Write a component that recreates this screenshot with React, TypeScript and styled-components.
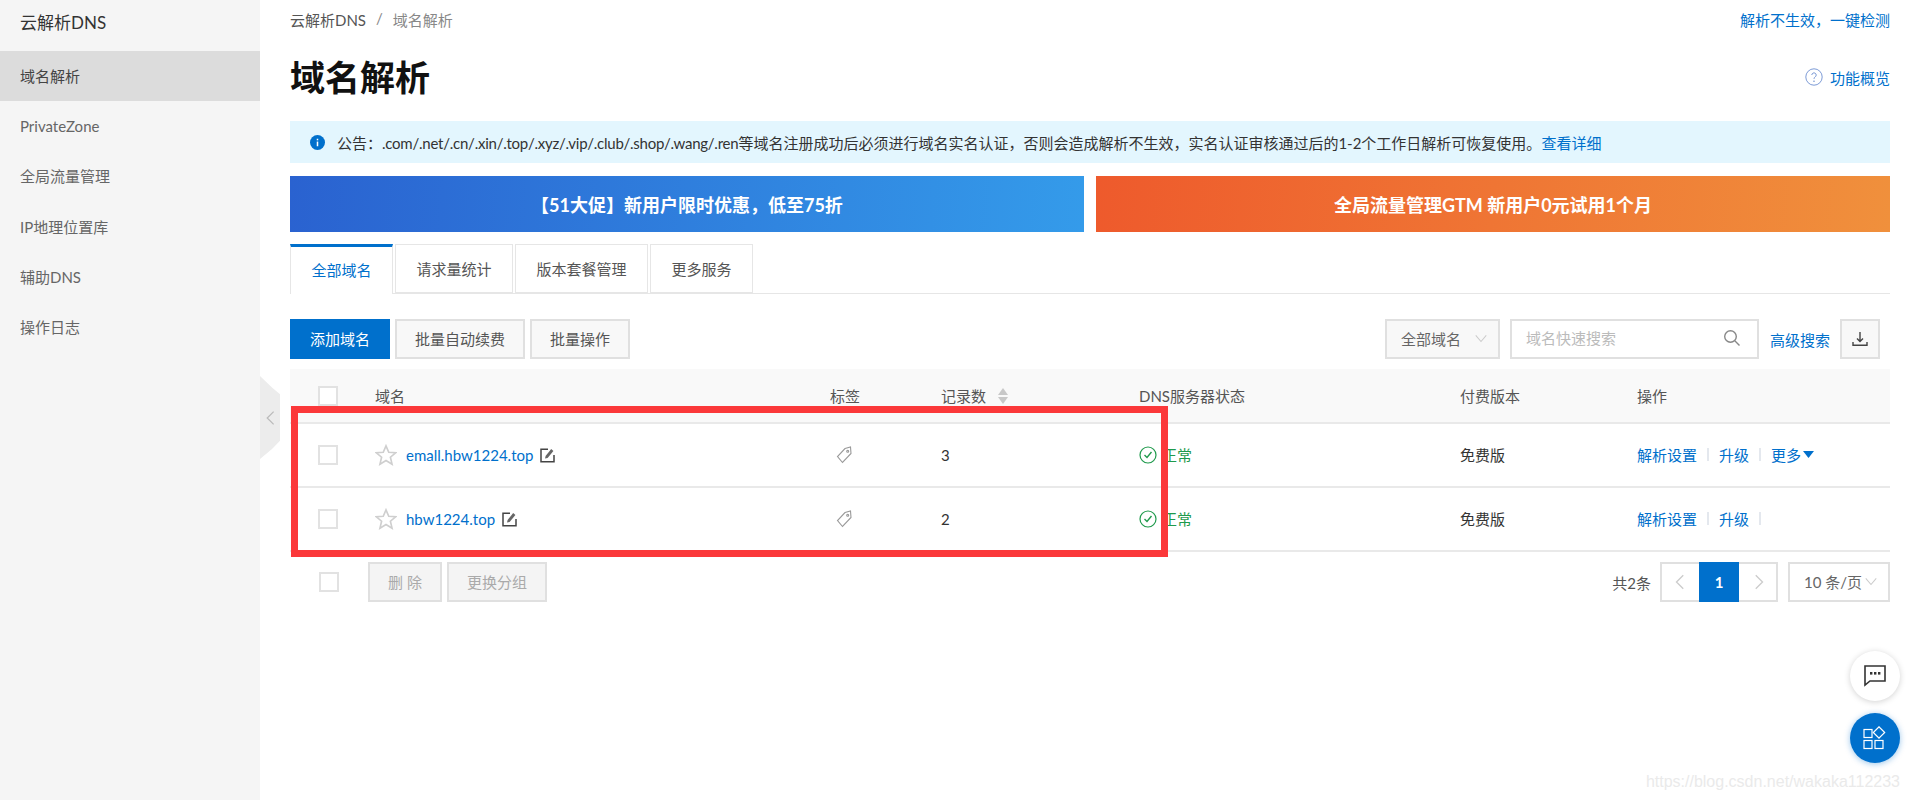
import React from 'react';
import styled, { createGlobalStyle } from 'styled-components';

const Global = createGlobalStyle`
  html, body { margin: 0; padding: 0; background: #fff; }
  body {
    font-family: Lato, "Noto Sans CJK SC", sans-serif;
    font-size: 15px;
    color: #333;
    overflow: hidden;
  }
  * { box-sizing: border-box; }
`;

const BLUE = '#0070cc';

const Page = styled.div`
  position: relative;
  display: flex;
  width: 1910px;
  height: 800px;
  overflow: hidden;
`;

const Sidebar = styled.aside`
  width: 260px;
  flex-shrink: 0;
  background: #f5f5f5;
`;

const SideTitle = styled.div`
  height: 51px;
  padding: 6px 0 0 20px;
  font-size: 17px;
  line-height: 34px;
  color: #333;
`;

const NavItem = styled.div<{ $active?: boolean }>`
  height: 50.2px;
  padding-left: 20px;
  line-height: 50px;
  color: ${({ $active }) => ($active ? '#444' : '#666')};
  background: ${({ $active }) => ($active ? '#dcdcdc' : 'transparent')};
`;

const CollapseHandle = styled.div`
  position: absolute;
  left: 260px;
  top: 376px;
  width: 20px;
  height: 83px;
  display: flex;
  align-items: center;
  justify-content: flex-start;
  padding-left: 3px;
  background: #ececec;
  clip-path: polygon(0 0, 60% 14%, 100% 22%, 100% 78%, 60% 88%, 0 100%);
`;

const Main = styled.main`
  flex: 1;
  min-width: 0;
  padding: 0 20px 0 30px;
`;

const TopBar = styled.div`
  height: 38px;
  display: flex;
  align-items: center;
  justify-content: space-between;
`;

const Crumbs = styled.div`
  display: flex;
  gap: 10px;
  color: #555;
`;

const CrumbMuted = styled.span`
  color: #888;
`;

const Link = styled.a`
  color: ${BLUE};
  text-decoration: none;
  cursor: pointer;
`;

const TitleRow = styled.div`
  height: 78px;
  margin-bottom: 5px;
  display: flex;
  align-items: center;
  justify-content: space-between;
`;

const PageTitle = styled.h1`
  margin: 0;
  font-size: 35px;
  line-height: 50px;
  font-weight: 700;
  color: #111;
`;

const HelpLink = styled(Link)`
  display: flex;
  align-items: center;
  gap: 7px;
`;

const Notice = styled.div`
  height: 42px;
  display: flex;
  align-items: center;
  gap: 12px;
  padding-left: 20px;
  background: #e3f6fe;
  color: #333;
  white-space: nowrap;
`;

const NoticeDomains = styled.span`
  letter-spacing: -0.24px;
`;

const Banners = styled.div`
  display: grid;
  grid-template-columns: 1fr 1fr;
  gap: 12px;
  margin-top: 13px;
`;

const Banner = styled.div<{ $from: string; $to: string }>`
  height: 56px;
  display: flex;
  align-items: center;
  justify-content: center;
  color: #fff;
  font-size: 18px;
  font-weight: 700;
  background: linear-gradient(95deg, ${({ $from }) => $from}, ${({ $to }) => $to});
`;

const Tabs = styled.div`
  display: flex;
  gap: 2px;
  height: 50px;
  margin-top: 12px;
  border-bottom: 1px solid #e6e6e6;
`;

const Tab = styled.div<{ $active?: boolean; $width: number }>`
  width: ${({ $width }) => $width}px;
  height: ${({ $active }) => ($active ? 50 : 49)}px;
  display: flex;
  align-items: center;
  justify-content: center;
  padding-bottom: ${({ $active }) => ($active ? 3 : 0)}px;
  background: #fff;
  border: 1px solid #e6e6e6;
  border-bottom: ${({ $active }) => ($active ? 'none' : '1px solid #e6e6e6')};
  border-top: ${({ $active }) => ($active ? `3px solid ${BLUE}` : '1px solid #e6e6e6')};
  color: ${({ $active }) => ($active ? BLUE : '#555')};
`;

const Toolbar = styled.div`
  display: flex;
  justify-content: space-between;
  margin-top: 25px;
  padding-right: 10px;
`;

const ToolGroup = styled.div`
  display: flex;
  align-items: center;
  gap: 5px;
`;

const Button = styled.button<{ $width: number; $primary?: boolean; $disabled?: boolean }>`
  width: ${({ $width }) => $width}px;
  height: 40px;
  padding: 0 0 2px;
  font: inherit;
  border: ${({ $primary }) => ($primary ? 'none' : '2px solid #e0e0e0')};
  background: ${({ $primary, $disabled }) => ($primary ? BLUE : $disabled ? '#f4f4f4' : '#f8f8f8')};
  color: ${({ $primary, $disabled }) => ($primary ? '#fff' : $disabled ? '#aaa' : '#555')};
`;

const SelectBox = styled.div<{ $width: number; $white?: boolean }>`
  width: ${({ $width }) => $width}px;
  height: 40px;
  display: flex;
  align-items: center;
  justify-content: space-between;
  padding: 0 10px 2px 14px;
  white-space: nowrap;
  border: 2px solid #e0e0e0;
  background: ${({ $white }) => ($white ? '#fff' : '#f8f8f8')};
  color: #666;
`;

const SearchBox = styled.div`
  width: 249px;
  height: 40px;
  margin-left: 5px;
  display: flex;
  align-items: center;
  justify-content: space-between;
  padding: 0 16px 3px 14px;
  border: 2px solid #e0e0e0;
  color: #bbb;
`;

const AdvLink = styled(Link)`
  margin-left: 6px;
`;

const IconButton = styled.div`
  width: 40px;
  height: 40px;
  margin-left: 5px;
  display: flex;
  align-items: center;
  justify-content: center;
  border: 2px solid #e0e0e0;
  background: #f8f8f8;
`;

const COLUMNS = '85px 455px 111px 198px 321px 177px 1fr';

const HeadRow = styled.div`
  display: grid;
  grid-template-columns: ${COLUMNS};
  align-items: center;
  height: 55px;
  margin-top: 10px;
  background: #f9f9f9;
  border-bottom: 2px solid #e9e9e9;
  color: #555;
`;

const BodyRow = styled.div`
  display: grid;
  grid-template-columns: ${COLUMNS};
  align-items: center;
  height: 64px;
  border-bottom: 2px solid #e9e9e9;
  color: #333;
`;

const CheckCell = styled.div`
  padding-left: 28px;
  display: flex;
`;

const Checkbox = styled.span`
  display: block;
  width: 20px;
  height: 20px;
  background: #fff;
  border: 2px solid #e2e2e2;
`;

const Cell = styled.div`
  display: flex;
  align-items: center;
`;

const TextCell = styled(Cell)`
  padding-bottom: 2px;
`;

const DomainCell = styled(Cell)`
  gap: 9px;
`;

const EditWrap = styled.span`
  display: flex;
  margin-left: -2px;
  padding-top: 1px;
`;

const TagWrap = styled.span`
  display: flex;
  margin-left: 6px;
`;

const SortIcon = styled.span`
  display: flex;
  margin-left: 12px;
`;

const StatusText = styled.span`
  margin: 0 0 2px 5px;
  color: #1f9a4c;
`;

const Sep = styled.i`
  display: block;
  width: 2px;
  height: 13px;
  margin: 0 10px;
  background: #e4e8ee;
`;

const More = styled(Link)`
  display: flex;
  align-items: center;
  gap: 2px;
`;

const Footer = styled.div`
  display: flex;
  align-items: center;
  justify-content: space-between;
  margin-top: 10px;
  padding-left: 29px;
`;

const FootLeft = styled.div`
  display: flex;
  align-items: center;
  gap: 5px;
`;

const FootCheck = styled(Checkbox)`
  margin-right: 24px;
`;

const FootRight = styled.div`
  display: flex;
  align-items: center;
`;

const Total = styled.span`
  margin-right: 9px;
  color: #555;
`;

const Pager = styled.div`
  display: flex;
  height: 40px;
  margin-right: 10px;
  border: 2px solid #e0e0e0;
`;

const PageCell = styled.div<{ $active?: boolean }>`
  margin: -2px 0;
  height: 40px;
  display: flex;
  align-items: center;
  justify-content: center;
  font-weight: ${({ $active }) => ($active ? 700 : 400)};
  color: #fff;
  background: ${({ $active }) => ($active ? BLUE : 'transparent')};
  width: ${({ $active }) => ($active ? 40 : 37)}px;
`;

const RedBox = styled.div`
  position: absolute;
  left: 291px;
  top: 406px;
  width: 877px;
  height: 151px;
  border: 7px solid #fb383a;
  pointer-events: none;
`;

const Fab = styled.div<{ $top: number; $primary?: boolean }>`
  position: absolute;
  left: 1850px;
  top: ${({ $top }) => $top}px;
  width: 50px;
  height: 50px;
  display: flex;
  align-items: center;
  justify-content: center;
  border-radius: 50%;
  background: ${({ $primary }) => ($primary ? BLUE : '#fff')};
  box-shadow: 0 1px 6px ${({ $primary }) => ($primary ? 'rgba(0,112,204,.4)' : 'rgba(0,0,0,.18)')};
`;

const Watermark = styled.div`
  position: absolute;
  right: 10px;
  top: 772px;
  font-family: "Liberation Sans", sans-serif;
  font-size: 16px;
  line-height: 20px;
  color: #eaeaea;
`;

const Chevron = ({ dir, color, size = 14 }: { dir: 'left' | 'right' | 'down'; color: string; size?: number }) => {
  const points = { left: '10,2 4,8 10,14', right: '6,2 12,8 6,14', down: '2,5 8,12 14,5' }[dir];
  return (
    <svg width={size} height={size} viewBox="0 0 16 16" fill="none" stroke={color} strokeWidth="1.2">
      <polyline points={points} />
    </svg>
  );
};

const StarIcon = () => (
  <svg width="22" height="22" viewBox="0 0 24 24" fill="none" stroke="#cfcfcf" strokeWidth="1.8">
    <polygon points="12,2 15,9 22.5,9.6 16.8,14.4 18.6,22 12,18 5.4,22 7.2,14.4 1.5,9.6 9,9" />
  </svg>
);

const EditIcon = () => (
  <svg width="15" height="15" viewBox="0 0 15 15" fill="none">
    <path d="M8 1.2H1v12.6h13V7" stroke="#444" strokeWidth="1.5" />
    <path d="M5 10.5l.6-2.6L11.2 1l2.2 2-5.8 6.9z" fill="#666" />
  </svg>
);

const TagIcon = () => (
  <svg width="16" height="18" viewBox="0 0 16 18" fill="none" stroke="#999" strokeWidth="1.1">
    <path d="M9 2.5l5.5-1.5.5 6.5L6.5 16.5 1.5 10.5z" />
    <circle cx="11.7" cy="5.3" r="1" />
  </svg>
);

const CheckCircle = () => (
  <svg width="18" height="18" viewBox="0 0 18 18" fill="none" stroke="#1f9a4c" strokeWidth="1.2">
    <circle cx="9" cy="9" r="8" />
    <polyline points="5.5,9 8,11.5 12.5,6" strokeWidth="1.4" />
  </svg>
);

const SortArrows = () => (
  <svg width="10" height="18" viewBox="0 0 10 18" fill="#c8c8c8">
    <polygon points="5,1 10,8 0,8" />
    <polygon points="5,17 10,10 0,10" />
  </svg>
);

const Domain = ({ name }: { name: string }) => (
  <DomainCell>
    <StarIcon />
    <Link>{name}</Link>
    <EditWrap><EditIcon /></EditWrap>
  </DomainCell>
);

const rows = [
  { name: 'emall.hbw1224.top', count: 3, more: true },
  { name: 'hbw1224.top', count: 2, more: false },
];

export default function App() {
  return (
    <Page>
      <Global />
      <Sidebar>
        <SideTitle>云解析DNS</SideTitle>
        <NavItem $active>域名解析</NavItem>
        <NavItem>PrivateZone</NavItem>
        <NavItem>全局流量管理</NavItem>
        <NavItem>IP地理位置库</NavItem>
        <NavItem>辅助DNS</NavItem>
        <NavItem>操作日志</NavItem>
      </Sidebar>
      <CollapseHandle><Chevron dir="left" color="#bbb" size={20} /></CollapseHandle>
      <Main>
        <TopBar>
          <Crumbs>
            <span>云解析DNS</span>
            <CrumbMuted>/</CrumbMuted>
            <CrumbMuted>域名解析</CrumbMuted>
          </Crumbs>
          <Link>解析不生效，一键检测</Link>
        </TopBar>
        <TitleRow>
          <PageTitle>域名解析</PageTitle>
          <HelpLink>
            <svg width="18" height="18" viewBox="0 0 18 18" fill="none" stroke="#7d9bd6" strokeWidth="1">
              <circle cx="9" cy="9" r="8.2" />
              <path d="M6.8 7a2.2 2.2 0 1 1 3.4 1.9c-.8.5-1.2 1-1.2 2" />
              <circle cx="9" cy="13.2" r=".4" />
            </svg>
            功能概览
          </HelpLink>
        </TitleRow>
        <Notice>
          <svg width="15" height="15" viewBox="0 0 16 16">
            <circle cx="8" cy="8" r="8" fill={BLUE} />
            <rect x="7.2" y="7" width="1.6" height="5" fill="#fff" />
            <rect x="7.2" y="4" width="1.6" height="1.7" fill="#fff" />
          </svg>
          <span>
            公告：<NoticeDomains>.com/.net/.cn/.xin/.top/.xyz/.vip/.club/.shop/.wang/.ren</NoticeDomains>等域名注册成功后必须进行域名实名认证，否则会造成解析不生效，实名认证审核通过后的1-2个工作日解析可恢复使用。
            <Link>查看详细</Link>
          </span>
        </Notice>
        <Banners>
          <Banner $from="#2a62d0" $to="#349bea">【51大促】新用户限时优惠，低至75折</Banner>
          <Banner $from="#ee5a2c" $to="#f0903c">全局流量管理GTM 新用户0元试用1个月</Banner>
        </Banners>
        <Tabs>
          <Tab $active $width={103}>全部域名</Tab>
          <Tab $width={118}>请求量统计</Tab>
          <Tab $width={133}>版本套餐管理</Tab>
          <Tab $width={103}>更多服务</Tab>
        </Tabs>
        <Toolbar>
          <ToolGroup>
            <Button $primary $width={100}>添加域名</Button>
            <Button $width={130}>批量自动续费</Button>
            <Button $width={100}>批量操作</Button>
          </ToolGroup>
          <ToolGroup>
            <SelectBox $width={115}>全部域名<Chevron dir="down" color="#ccc" /></SelectBox>
            <SearchBox>
              域名快速搜索
              <svg width="18" height="18" viewBox="0 0 18 18" fill="none" stroke="#888" strokeWidth="1.4">
                <circle cx="7.5" cy="7.5" r="5.8" />
                <line x1="11.8" y1="11.8" x2="16.5" y2="16.5" />
              </svg>
            </SearchBox>
            <AdvLink>高级搜索</AdvLink>
            <IconButton>
              <svg width="16" height="16" viewBox="0 0 16 16" fill="none" stroke="#444" strokeWidth="1.4">
                <path d="M8 1v9M5 7.5L8 10.5 11 7.5" />
                <path d="M1 11v3.2h14V11" />
              </svg>
            </IconButton>
          </ToolGroup>
        </Toolbar>
        <HeadRow>
          <CheckCell><Checkbox /></CheckCell>
          <Cell>域名</Cell>
          <Cell>标签</Cell>
          <Cell>记录数<SortIcon><SortArrows /></SortIcon></Cell>
          <Cell>DNS服务器状态</Cell>
          <Cell>付费版本</Cell>
          <Cell>操作</Cell>
        </HeadRow>
        {rows.map((row) => (
          <BodyRow key={row.name}>
            <CheckCell><Checkbox /></CheckCell>
            <Domain name={row.name} />
            <Cell><TagWrap><TagIcon /></TagWrap></Cell>
            <Cell>{row.count}</Cell>
            <Cell><CheckCircle /><StatusText>正常</StatusText></Cell>
            <TextCell>免费版</TextCell>
            <TextCell>
              <Link>解析设置</Link>
              <Sep />
              <Link>升级</Link>
              <Sep />
              {row.more && (
                <More>
                  更多
                  <svg width="11" height="7" viewBox="0 0 11 7" fill={BLUE}><polygon points="0,0 11,0 5.5,7" /></svg>
                </More>
              )}
            </TextCell>
          </BodyRow>
        ))}
        <Footer>
          <FootLeft>
            <FootCheck />
            <Button $disabled $width={74}>删 除</Button>
            <Button $disabled $width={100}>更换分组</Button>
          </FootLeft>
          <FootRight>
            <Total>共2条</Total>
            <Pager>
              <PageCell><Chevron dir="left" color="#ccc" size={18} /></PageCell>
              <PageCell $active>1</PageCell>
              <PageCell><Chevron dir="right" color="#ccc" size={18} /></PageCell>
            </Pager>
            <SelectBox $width={102} $white>10 条/页<Chevron dir="down" color="#ccc" /></SelectBox>
          </FootRight>
        </Footer>
      </Main>
      <RedBox />
      <Fab $top={651}>
        <svg width="24" height="24" viewBox="0 0 24 24" fill="none">
          <path d="M2 2h20v15H7l-5 4z" stroke="#333" strokeWidth="1.6" />
          <rect x="7" y="8" width="2.4" height="2.6" fill="#333" />
          <rect x="11" y="8" width="2.4" height="2.6" fill="#333" />
          <rect x="15" y="8" width="2.4" height="2.6" fill="#333" />
        </svg>
      </Fab>
      <Fab $top={713} $primary>
        <svg width="24" height="24" viewBox="0 0 24 24" fill="none" stroke="#fff" strokeWidth="1.2">
          <rect x="1" y="3.5" width="8" height="8" />
          <rect x="1" y="14.5" width="8" height="8" />
          <rect x="12" y="14.5" width="8" height="8" />
          <rect x="12" y="2.5" width="8" height="8" transform="rotate(45 16 6.5)" />
        </svg>
      </Fab>
      <Watermark>https://blog.csdn.net/wakaka112233</Watermark>
    </Page>
  );
}
